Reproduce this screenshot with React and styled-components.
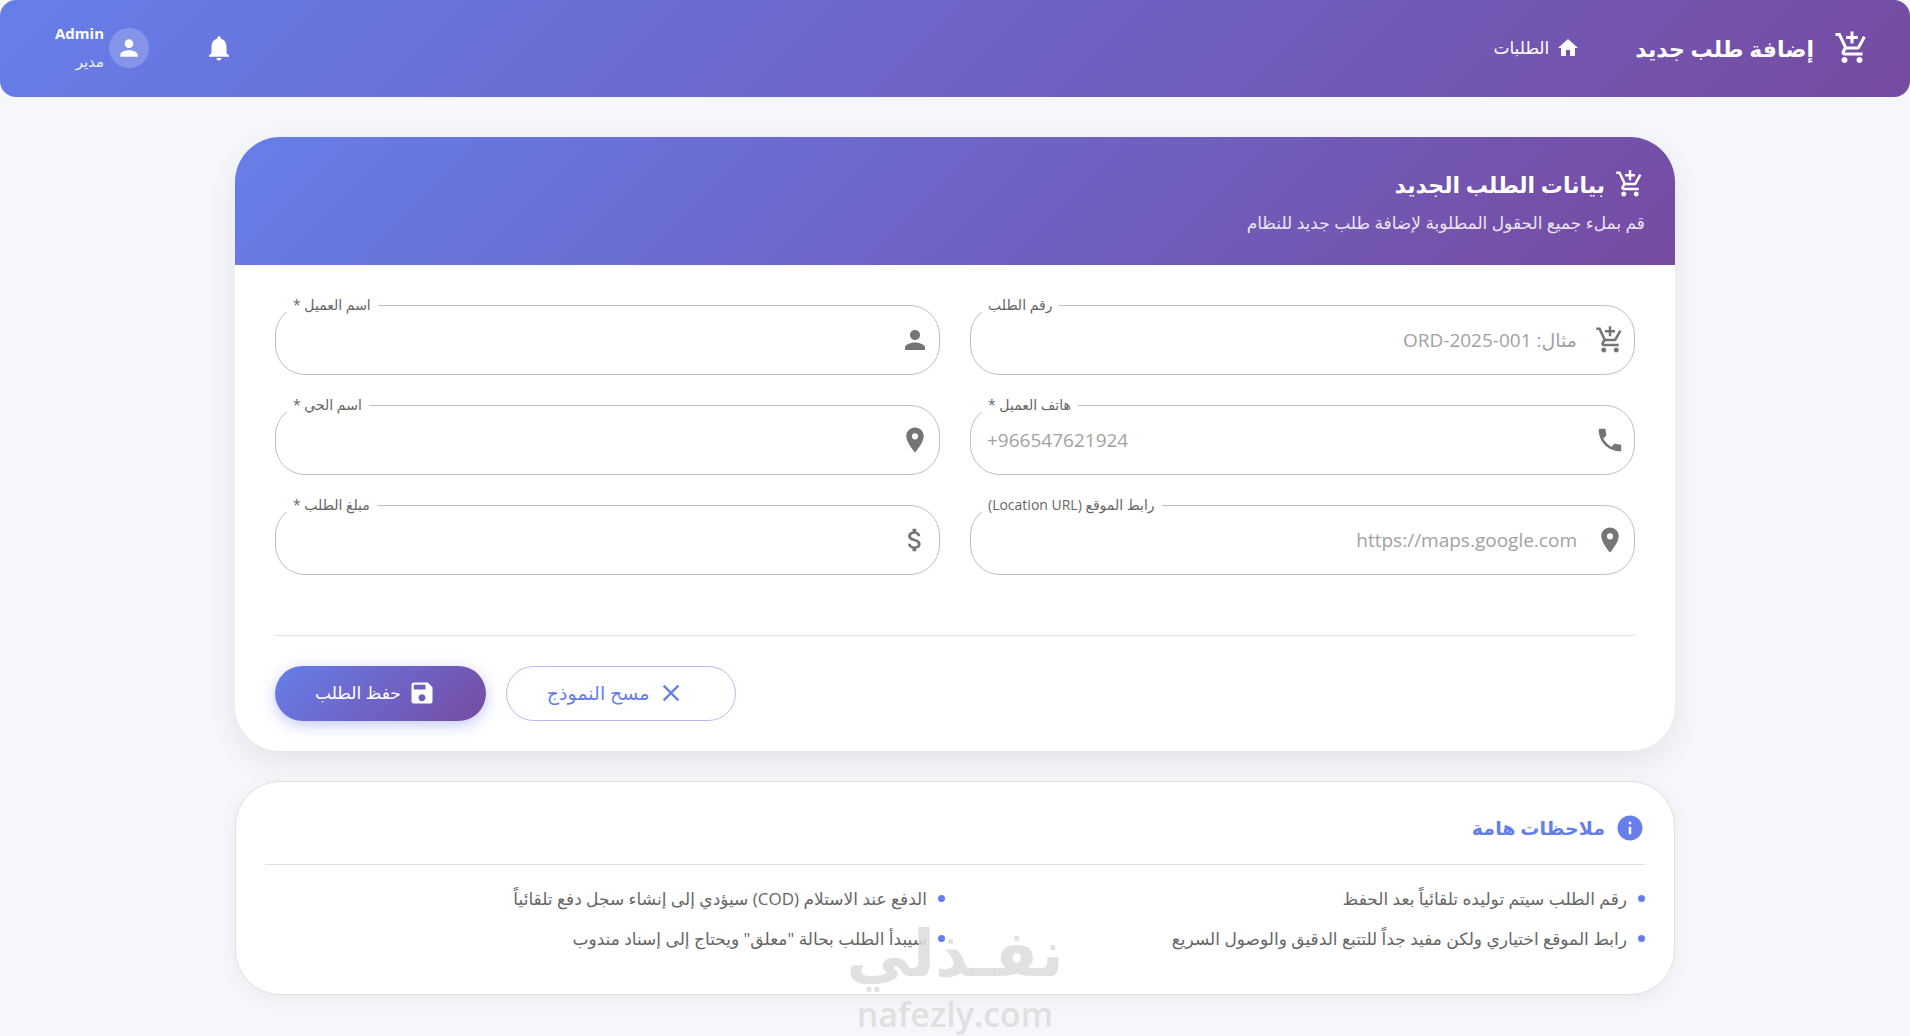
import React from 'react';
import styled, { createGlobalStyle } from 'styled-components';
import {
  MdAddShoppingCart,
  MdAttachMoney,
  MdClose,
  MdHome,
  MdInfo,
  MdLocationOn,
  MdNotifications,
  MdPerson,
  MdPhone,
  MdSave,
} from 'react-icons/md';

const fields = [
  { id: 'orderNumber', label: 'رقم الطلب', placeholder: 'مثال: ORD-2025-001', icon: MdAddShoppingCart },
  { id: 'customerName', label: 'اسم العميل', required: true, icon: MdPerson },
  { id: 'customerPhone', label: 'هاتف العميل', required: true, type: 'tel', dir: 'ltr', placeholder: '+966547621924', icon: MdPhone },
  { id: 'district', label: 'اسم الحي', required: true, icon: MdLocationOn },
  { id: 'locationUrl', label: 'رابط الموقع (Location URL)', placeholder: 'https://maps.google.com', icon: MdLocationOn },
  { id: 'amount', label: 'مبلغ الطلب', required: true, icon: MdAttachMoney },
];

const notes = [
  'رقم الطلب سيتم توليده تلقائياً بعد الحفظ',
  'الدفع عند الاستلام (COD) سيؤدي إلى إنشاء سجل دفع تلقائياً',
  'رابط الموقع اختياري ولكن مفيد جداً للتتبع الدقيق والوصول السريع',
  'سيبدأ الطلب بحالة "معلق" ويحتاج إلى إسناد مندوب',
];

function Field ({ field }) {
  const Icon = field.icon;
  return (
    <FieldBox>
      <FieldLabel htmlFor={field.id}>
        {field.label}
        {field.required && ' *'}
      </FieldLabel>
      <Icon size={30} aria-hidden="true" />
      <FieldInput
        id={field.id}
        name={field.id}
        type={field.type || 'text'}
        dir={field.dir || 'rtl'}
        placeholder={field.placeholder}
        required={field.required}
      />
    </FieldBox>
  );
}

export default function App () {
  return (
    <Page dir="rtl" lang="ar">
      <GlobalStyle />
      <TopBar>
        <PageTitle>
          <MdAddShoppingCart size={36} aria-hidden="true" />
          إضافة طلب جديد
        </PageTitle>
        <nav>
          <NavLink href="#orders">
            <MdHome size={24} aria-hidden="true" />
            الطلبات
          </NavLink>
        </nav>
        <BellButton type="button" aria-label="الإشعارات">
          <MdNotifications size={30} />
        </BellButton>
        <UserButton type="button">
          <Avatar>
            <MdPerson size={26} />
          </Avatar>
          <UserText>
            <UserName>Admin</UserName>
            <UserRole>مدير</UserRole>
          </UserText>
        </UserButton>
      </TopBar>

      <Main>
        <OrderCard>
          <CardHeader>
            <CardTitle>
              <MdAddShoppingCart size={30} aria-hidden="true" />
              بيانات الطلب الجديد
            </CardTitle>
            <CardSubtitle>قم بملء جميع الحقول المطلوبة لإضافة طلب جديد للنظام</CardSubtitle>
          </CardHeader>
          <Form noValidate onSubmit={(e) => e.preventDefault()}>
            <FieldGrid>
              {fields.map((field) => <Field key={field.id} field={field} />)}
            </FieldGrid>
            <Actions>
              <ClearButton type="reset">
                <MdClose size={28} aria-hidden="true" />
                مسح النموذج
              </ClearButton>
              <SaveButton type="submit">
                <MdSave size={28} aria-hidden="true" />
                حفظ الطلب
              </SaveButton>
            </Actions>
          </Form>
        </OrderCard>

        <NotesCard>
          <NotesTitle>
            <MdInfo size={30} aria-hidden="true" />
            ملاحظات هامة
          </NotesTitle>
          <NotesList>
            {notes.map((note) => <Note key={note}>{note}</Note>)}
          </NotesList>
        </NotesCard>
      </Main>

      <Watermark>
        <WatermarkName>نفـذلي</WatermarkName>
        <WatermarkSite dir="ltr">nafezly.com</WatermarkSite>
      </Watermark>
    </Page>
  );
}

const GlobalStyle = createGlobalStyle`
  * {
    box-sizing: border-box;
  }

  body {
    margin: 0;
    background: #f5f7fb;
  }

  body, button, input {
    font-family: "Open Sans", "DejaVu Sans", sans-serif;
  }

  svg {
    flex-shrink: 0;
  }
`;

const gradient = 'linear-gradient(135deg, #667eea 0%, #764ba2 100%)';

const Page = styled.div`
  position: relative;
  min-height: 100vh;
`;

const TopBar = styled.header`
  display: flex;
  align-items: center;
  height: 97px;
  padding: 0 40px 2px;
  color: #fff;
  background: ${gradient};
  border-radius: 16px;
`;

const PageTitle = styled.h1`
  display: flex;
  align-items: center;
  gap: 20px;
  margin: 0;
  font-size: 22px;
  font-weight: 700;
`;

const NavLink = styled.a`
  display: flex;
  align-items: center;
  gap: 7px;
  margin-right: 55px;
  color: #fff;
  font-size: 17px;
  text-decoration: none;
`;

const BellButton = styled.button`
  display: flex;
  margin-right: auto;
  padding: 0;
  color: #fff;
  background: none;
  border: 0;
  cursor: pointer;
`;

const UserButton = styled.button`
  display: flex;
  align-items: center;
  gap: 5px;
  margin-right: 40px;
  padding: 0 15px;
  color: #fff;
  background: none;
  border: 0;
  cursor: pointer;
`;

const Avatar = styled.span`
  display: flex;
  align-items: center;
  justify-content: center;
  width: 40px;
  height: 40px;
  background: rgba(255, 255, 255, 0.2);
  border-radius: 50%;
`;

const UserText = styled.span`
  display: flex;
  flex-direction: column;
  padding-bottom: 2px;
  text-align: right;
`;

const UserName = styled.span`
  font-size: 15px;
  font-weight: 700;
  line-height: 28px;
`;

const UserRole = styled.span`
  font-size: 15px;
  line-height: 28px;
  opacity: 0.9;
`;

const Main = styled.main`
  display: flex;
  flex-direction: column;
  gap: 30px;
  max-width: 1440px;
  margin: 0 auto;
  padding: 40px 0;
`;

const OrderCard = styled.section`
  overflow: hidden;
  background: #fff;
  border-radius: 45px;
  box-shadow: 0 10px 30px rgba(0, 0, 0, 0.08);
`;

const CardHeader = styled.div`
  display: flex;
  flex-direction: column;
  gap: 10px;
  padding: 30px;
  color: #fff;
  background: ${gradient};
`;

const CardTitle = styled.h2`
  display: flex;
  align-items: center;
  gap: 10px;
  margin: 0;
  font-size: 22px;
  font-weight: 700;
  line-height: 34px;
`;

const CardSubtitle = styled.p`
  margin: 0;
  font-size: 17px;
  line-height: 24px;
  opacity: 0.85;
`;

const Form = styled.form`
  padding: 40px 40px 30px;
`;

const FieldGrid = styled.div`
  display: grid;
  grid-template-columns: 1fr 1fr;
  gap: 30px;
`;

const FieldBox = styled.div`
  position: relative;
  display: flex;
  align-items: center;
  gap: 18px;
  height: 70px;
  padding: 0 9px 0 16px;
  color: #757575;
  background: #fff;
  border: 1px solid #bfbfbf;
  border-radius: 30px;
`;

/* sits on the top border of the box and cuts it open */
const FieldLabel = styled.label`
  position: absolute;
  top: -8px;
  left: 10px;
  padding: 0 7px;
  color: #666;
  background: #fff;
  font-size: 14px;
  line-height: 14px;
`;

const FieldInput = styled.input`
  flex: 1;
  min-width: 0;
  height: 100%;
  padding: 0;
  color: #333;
  background: none;
  border: 0;
  outline: 0;
  font-size: 19px;

  &::placeholder {
    color: #a2a2a2;
    opacity: 1;
  }
`;

const Actions = styled.div`
  display: flex;
  justify-content: flex-end;
  gap: 20px;
  margin-top: 60px;
  padding-top: 30px;
  border-top: 1px solid #e0e0e0;
`;

const ActionButton = styled.button`
  display: flex;
  align-items: center;
  gap: 7px;
  height: 55px;
  padding: 0 50px 2px 40px;
  border-radius: 28px;
  font-size: 17px;
  cursor: pointer;
`;

const ClearButton = styled(ActionButton)`
  color: #667eea;
  background: #fff;
  border: 1px solid #bcb8ee;
  font-size: 19px;
`;

const SaveButton = styled(ActionButton)`
  color: #fff;
  background: ${gradient};
  border: 0;
  box-shadow: 0 4px 15px rgba(102, 126, 234, 0.4);
`;

const NotesCard = styled.section`
  padding: 29px;
  background: #fff;
  border: 1px solid #e0e0e0;
  border-radius: 45px;
  box-shadow: 0 4px 20px rgba(0, 0, 0, 0.05);
`;

const NotesTitle = styled.h2`
  display: flex;
  align-items: center;
  gap: 10px;
  margin: 0;
  padding-bottom: 19px;
  color: #667eea;
  border-bottom: 1px solid #e0e0e0;
  font-size: 19px;
  font-weight: 700;
  line-height: 34px;
`;

const NotesList = styled.ul`
  display: grid;
  grid-template-columns: 1fr 1fr;
  column-gap: 20px;
  margin: 0;
  padding: 13px 0 7px;
  list-style: none;
`;

const Note = styled.li`
  display: flex;
  align-items: center;
  gap: 11px;
  height: 40px;
  color: #666;
  font-size: 17px;

  &::before {
    content: "";
    width: 7px;
    height: 7px;
    background: #667eea;
    border-radius: 50%;
  }
`;

const Watermark = styled.div`
  position: absolute;
  right: 0;
  bottom: 0;
  left: 0;
  display: flex;
  flex-direction: column;
  align-items: center;
  color: rgba(220, 220, 220, 0.85);
  font-weight: 700;
  pointer-events: none;
`;

const WatermarkName = styled.span`
  font-size: 64px;
  line-height: 80px;
`;

const WatermarkSite = styled.span`
  font-size: 34px;
  font-weight: 600;
  line-height: 44px;
`;
